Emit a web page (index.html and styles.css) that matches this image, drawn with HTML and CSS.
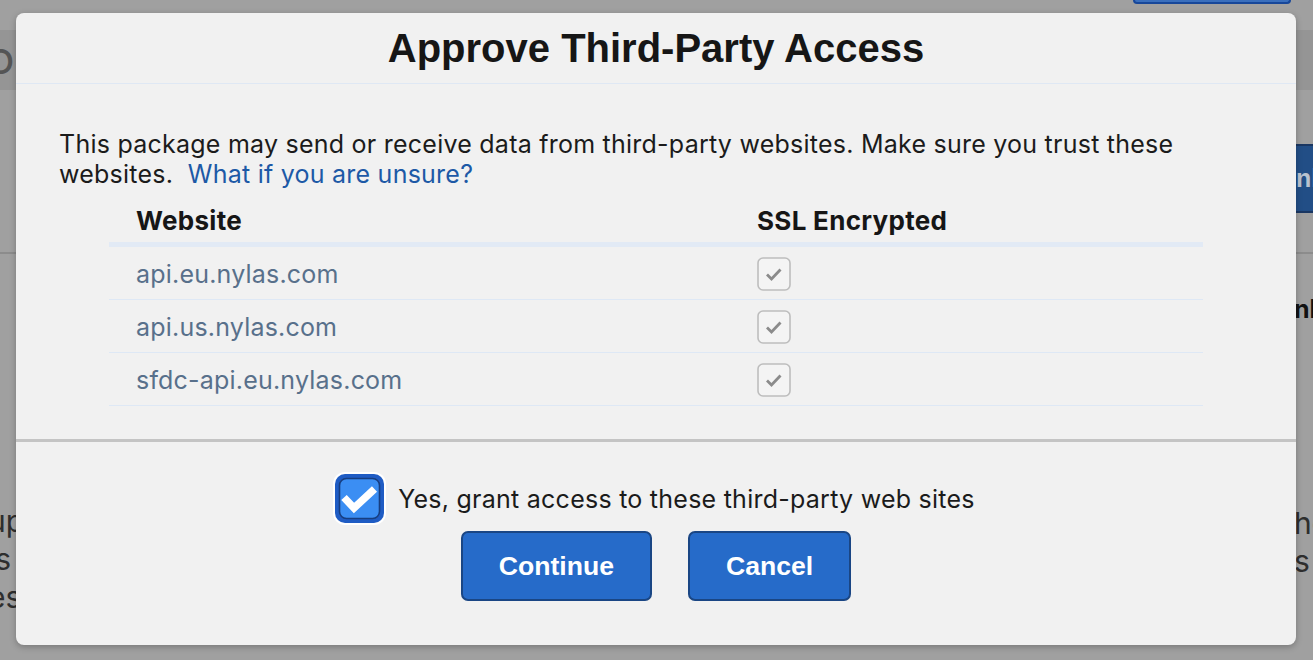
FILE: index.html
```html
<!DOCTYPE html>
<html lang="en">
<head>
<meta charset="utf-8">
<title>Approve Third-Party Access</title>
<link rel="stylesheet" href="styles.css">
</head>
<body>
<div class="page">
  <div class="topbar"><div class="top-btn"></div></div>
  <div class="band"><span class="band-text">o</span></div>
  <div class="toolbar"><div class="side-btn">nload</div></div>
  <div class="section">
    <div class="sec-col left"></div>
    <div class="sec-col right"><span class="sec-title">nb</span></div>
  </div>
  <div class="content">
    <div class="content-col left">
      <span>up</span><span>is</span><span>es</span>
    </div>
    <div class="content-col right">
      <span>he</span><span>s</span>
    </div>
  </div>
</div>

<div class="modal">
  <div class="modal-header">
    <h1 class="modal-title">Approve Third-Party Access</h1>
  </div>
  <div class="modal-body">
    <p class="intro">This package may send or receive data from third-party websites. Make sure you trust these websites.&nbsp; <a class="link" href="#">What if you are unsure?</a></p>
    <div class="sites">
      <div class="sites-row head">
        <div class="cell">Website</div>
        <div class="cell">SSL Encrypted</div>
      </div>
      <div class="sites-row">
        <div class="cell url">api.eu.nylas.com</div>
        <div class="cell"><svg class="mini-check" width="34" height="34" viewBox="0 0 34 34"><rect x="1" y="1" width="32" height="32" rx="5" fill="#f4f4f4" stroke="#bdbdbd" stroke-width="1.6"/><path d="M10 17.5 L14.5 22 L23.5 12.5" fill="none" stroke="#8b8b8b" stroke-width="2.8"/></svg></div>
      </div>
      <div class="sites-row">
        <div class="cell url">api.us.nylas.com</div>
        <div class="cell"><svg class="mini-check" width="34" height="34" viewBox="0 0 34 34"><rect x="1" y="1" width="32" height="32" rx="5" fill="#f4f4f4" stroke="#bdbdbd" stroke-width="1.6"/><path d="M10 17.5 L14.5 22 L23.5 12.5" fill="none" stroke="#8b8b8b" stroke-width="2.8"/></svg></div>
      </div>
      <div class="sites-row">
        <div class="cell url">sfdc-api.eu.nylas.com</div>
        <div class="cell"><svg class="mini-check" width="34" height="34" viewBox="0 0 34 34"><rect x="1" y="1" width="32" height="32" rx="5" fill="#f4f4f4" stroke="#bdbdbd" stroke-width="1.6"/><path d="M10 17.5 L14.5 22 L23.5 12.5" fill="none" stroke="#8b8b8b" stroke-width="2.8"/></svg></div>
      </div>
    </div>
  </div>
  <div class="modal-footer">
    <label class="grant">
      <svg class="big-check" width="53" height="53" viewBox="0 0 53 53"><rect x="0" y="0" width="53" height="53" rx="12" fill="#ffffff"/><rect x="2" y="2" width="49" height="49" rx="10" fill="#1f5cc4"/><rect x="6.5" y="6.5" width="40" height="40" rx="7" fill="#3b8ef3" stroke="#173e80" stroke-width="1.6"/><path d="M11 25.5 L21 36 L41.5 17" fill="none" stroke="#ffffff" stroke-width="7.5"/></svg>
      <span class="grant-text">Yes, grant access to these third-party web sites</span>
    </label>
    <div class="actions">
      <button class="btn">Continue</button>
      <button class="btn">Cancel</button>
    </div>
  </div>
</div>
</body>
</html>
```

FILE: styles.css
```css
* { box-sizing: border-box; }
html, body { margin: 0; padding: 0; }
body {
  width: 1313px;
  height: 660px;
  overflow: hidden;
  background: #a0a0a0;
  font-family: Inter, "Noto Sans", sans-serif;
  position: relative;
}

/* background page (dimmed) */
.page { height: 660px; overflow: hidden; background: #a0a0a0; }
.topbar { height: 30px; }
.top-btn {
  margin-left: 1133px;
  width: 158px;
  height: 4px;
  background: #3a6fbd;
  border: 2px solid #17479a;
  border-top: none;
  border-radius: 0 0 6px 6px;
}
.band {
  height: 60px;
  background: #959595;
  display: flex;
  align-items: center;
}
.band-text {
  margin-left: -13px;
  font-size: 46px;
  line-height: 46px;
  color: #555555;
  padding-bottom: 6px;
}
.toolbar {
  height: 164px;
  border-bottom: 2px solid #8c8c8c;
  padding-top: 54px;
}
.side-btn {
  margin-left: 1180px;
  width: 200px;
  height: 69px;
  padding-left: 114px;
  background: #224e86;
  border: 2px solid #1a3762;
  border-radius: 6px;
  color: #b9c2cf;
  font-family: "Liberation Sans", Arial, sans-serif;
  font-weight: bold;
  font-size: 25px;
  line-height: 65px;
}
.section {
  height: 240px;
  display: flex;
  justify-content: space-between;
  padding-top: 40px;
}
.sec-col.right { width: 17px; overflow: visible; }
.sec-title {
  display: block;
  margin-left: -2px;
  font-family: Inter, sans-serif;
  font-weight: 700;
  font-size: 25px;
  color: #121212;
  white-space: nowrap;
}
.content {
  display: flex;
  justify-content: space-between;
  margin-top: 8px;
}
.content-col {
  display: flex;
  flex-direction: column;
  font-size: 30px;
  line-height: 38px;
  color: #2e2e2e;
  white-space: nowrap;
}
.content-col.left { width: 16px; margin-left: -12px; }
.content-col.right { width: 17px; margin-top: 2px; margin-right: 2px; }

/* modal */
.modal {
  position: absolute;
  left: 16px;
  top: 13px;
  width: 1280px;
  height: 632px;
  background: #f1f1f1;
  border-radius: 8px;
  box-shadow: 0 2px 6px rgba(0, 0, 0, 0.25);
  display: flex;
  flex-direction: column;
  overflow: hidden;
}
.modal-header {
  height: 71px;
  border-bottom: 1px solid #dfe8f4;
  display: flex;
  align-items: center;
  justify-content: center;
}
.modal-title {
  margin: 0;
  font-family: "Liberation Sans", Arial, sans-serif;
  font-weight: bold;
  font-size: 40px;
  color: #161616;
  line-height: 46px;
}
.modal-body {
  padding: 45px 43px 33px;
}
.intro {
  margin: 0;
  font-size: 25px;
  letter-spacing: 0.24px;
  line-height: 30px;
  color: #1b1b1b;
}
.link {
  color: #1d59a6;
  text-decoration: none;
}
.sites {
  margin: 7px 50px 0;
}
.sites-row {
  display: grid;
  grid-template-columns: 621px 1fr;
  height: 53px;
  border-bottom: 1px solid #dee8f5;
  align-items: center;
  padding-top: 2px;
}
.sites-row.head {
  height: 51px;
  border-bottom: 5px solid #e2eaf5;
  align-items: start;
  padding-top: 10px;
}
.cell {
  padding: 0 27px;
  font-size: 25px;
  letter-spacing: 0.2px;
  line-height: 30px;
  display: flex;
  align-items: center;
}
.head .cell {
  font-weight: 700;
  font-size: 26px;
  letter-spacing: 0.3px;
  color: #161616;
}
.url { color: #58708b; }
.mini-check { display: block; }

.modal-footer {
  border-top: 3px solid #c4c4c4;
  padding-top: 30px;
  display: flex;
  flex-direction: column;
  align-items: center;
}
.grant {
  display: flex;
  align-items: center;
  gap: 12px;
  height: 53px;
  margin-left: -4px;
}
.big-check { display: block; }
.grant-text {
  font-size: 25px;
  letter-spacing: 0.25px;
  color: #1b1b1b;
  padding-top: 1px;
}
.actions {
  display: flex;
  gap: 36px;
  margin-top: 6px;
}
.btn {
  height: 70px;
  padding: 0 36px;
  background: #266bc9;
  border: 2px solid #1a4684;
  border-radius: 7px;
  color: #ffffff;
  font-family: "Liberation Sans", Arial, sans-serif;
  font-weight: bold;
  font-size: 26.6px;
}
```
